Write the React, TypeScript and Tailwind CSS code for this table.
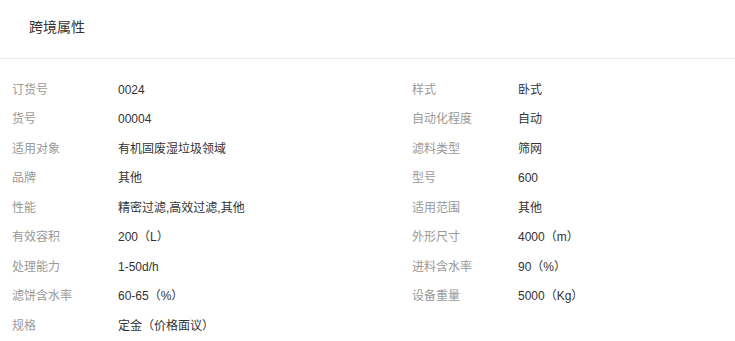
import React from "react";

const left: [string, string][] = [
  ["订货号", "0024"],
  ["货号", "00004"],
  ["适用对象", "有机固废湿垃圾领域"],
  ["品牌", "其他"],
  ["性能", "精密过滤,高效过滤,其他"],
  ["有效容积", "200（L）"],
  ["处理能力", "1-50d/h"],
  ["滤饼含水率", "60-65（%）"],
  ["规格", "定金（价格面议）"],
];

const right: [string, string][] = [
  ["样式", "卧式"],
  ["自动化程度", "自动"],
  ["滤料类型", "筛网"],
  ["型号", "600"],
  ["适用范围", "其他"],
  ["外形尺寸", "4000（m）"],
  ["进料含水率", "90（%）"],
  ["设备重量", "5000（Kg）"],
];

function Col({ items, w }: { items: [string, string][]; w: string }) {
  return (
    <div className={`flex flex-col ${w}`}>
      {items.map(([k, v]) => (
        <div key={k} className="flex items-center h-[29.5px] text-[12px] leading-[16px]">
          <div className="w-[106px] shrink-0 text-[#999999]">{k}</div>
          <div className="text-[#333333]">{v}</div>
        </div>
      ))}
    </div>
  );
}

export default function App() {
  return (
    <div
      className="w-[735px] h-[341px] bg-white overflow-hidden"
      style={{ fontFamily: '"Liberation Sans", "Noto Sans CJK SC", sans-serif' }}
    >
      <div className="h-[59px] border-b border-[#e8e8e8] pl-[29px] pt-[17px] text-[14px] leading-[20px] text-[#333333]">
        跨境属性
      </div>
      <div className="flex px-[12px] pt-[16px]">
        <Col items={left} w="w-[400px]" />
        <Col items={right} w="flex-1" />
      </div>
    </div>
  );
}
